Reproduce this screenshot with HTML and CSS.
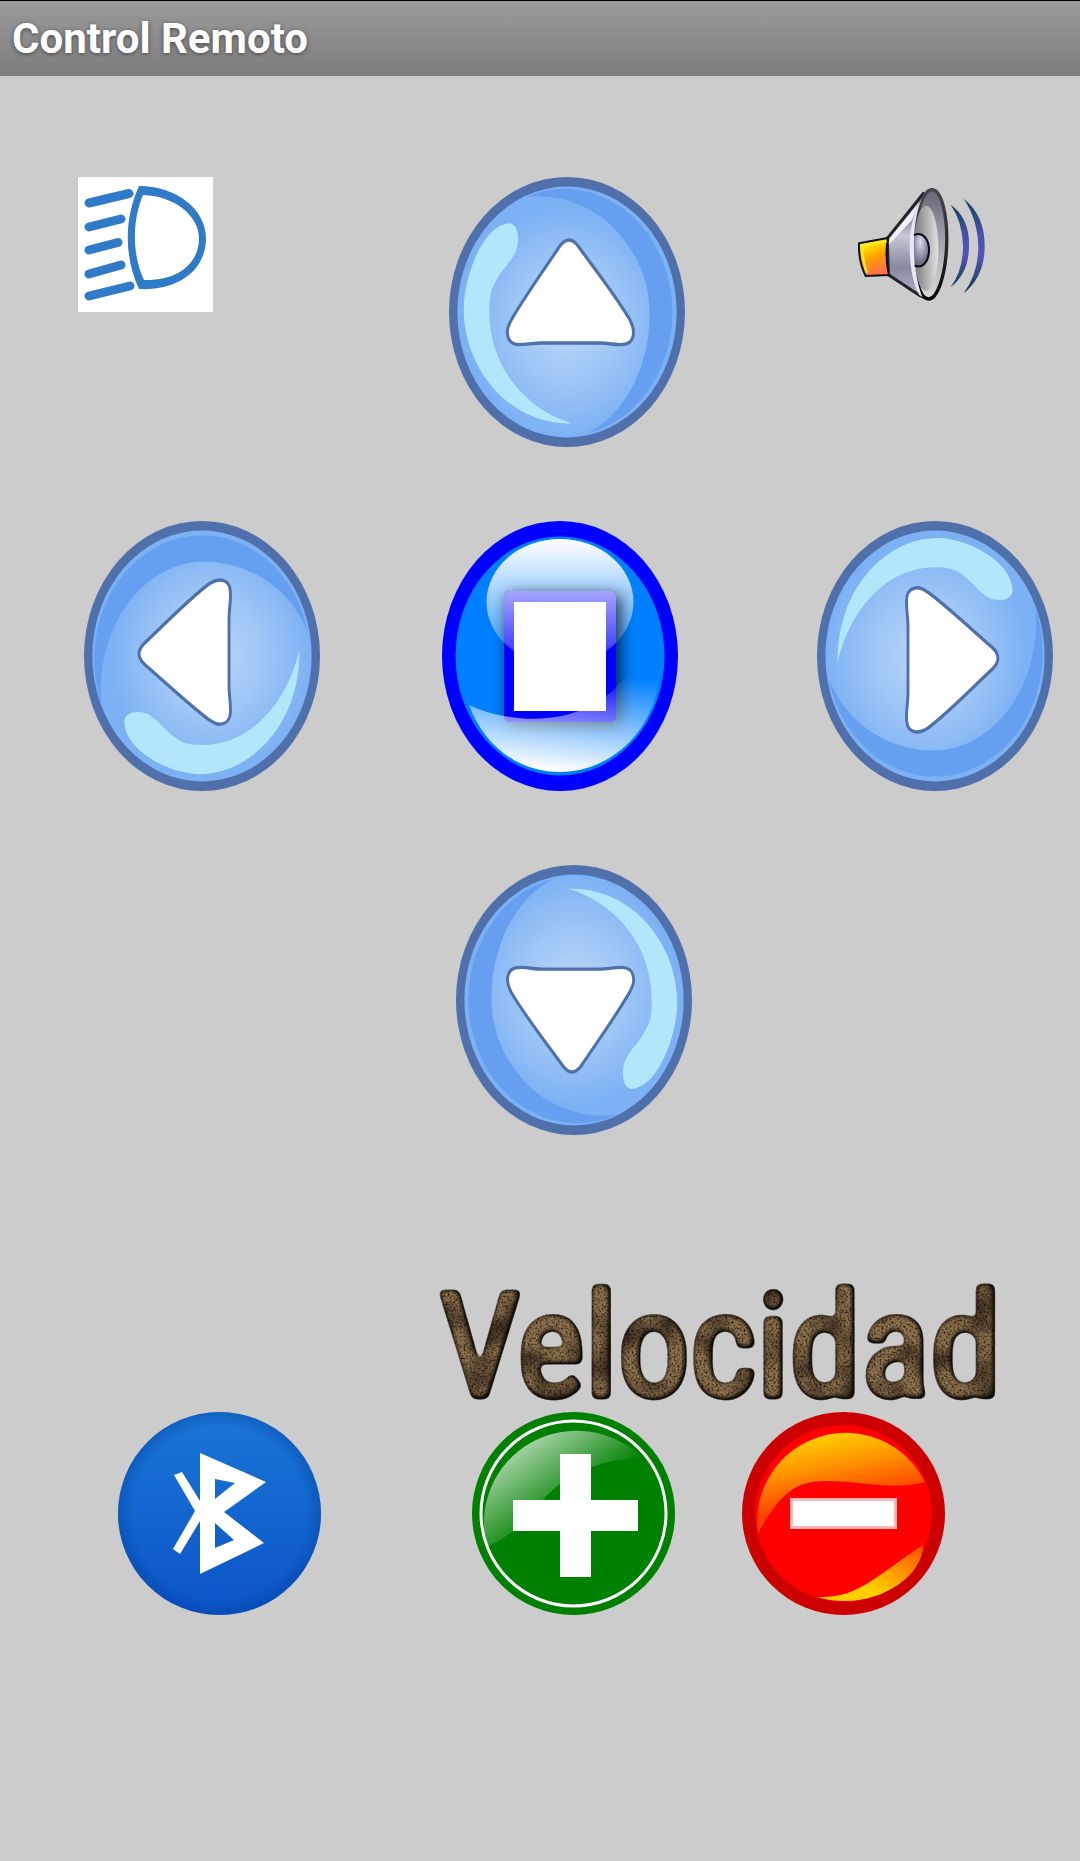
FILE: index.html
```html
<!DOCTYPE html>
<html lang="es">
<head>
<meta charset="utf-8">
<meta name="viewport" content="width=device-width, initial-scale=1">
<title>Control Remoto</title>
<link rel="stylesheet" href="styles.css">
</head>
<body>
<svg class="defs" aria-hidden="true">
  <defs>
    <radialGradient id="orb" cx="0.5" cy="0.54" r="0.46">
      <stop offset="0" stop-color="#bbd6f8"/>
      <stop offset="0.5" stop-color="#a0c7f6"/>
      <stop offset="1" stop-color="#7cb1f4"/>
    </radialGradient>
    <symbol id="arrow" viewBox="0 0 240 240" preserveAspectRatio="none" overflow="visible">
      <circle cx="120" cy="120" r="120" fill="#5070ab"/>
      <circle cx="120" cy="120" r="111.5" fill="url(#orb)"/>
      <path fill="#669ff0" d="M77 18C110 14 143 25 165 43C190 64 204 92 204 121C204 170 178 212 140 228A110 110 0 1 0 77 18Z"/>
      <path fill="#b1e6fb" d="M62 41C69 42 71 50 70 58C69 72 54 81 48 92C42 100 41 108 41 120C41 167 75 205 125 219C109 219 98 217 86 213C44 199 15 159 15 118C15 87 36 41 62 41Z"/>
      <path fill="#fff" stroke="#5070ab" stroke-width="3" d="M113 61Q122 51 131 61C150 84 170 106 184 127C188 134 188 139 187 142C185 149 178 149 173 149C166 149 161 147.500 154 147.500H93C86 147.500 81 149 71 149C65 149 61 146 60 142C58 136 61 131 64 126C78 105 97 82 113 61Z"/>
    </symbol>
    <filter id="stone" x="-5%" y="-5%" width="110%" height="110%" color-interpolation-filters="sRGB">
      <!-- Round the corners of the letters -->
      <feGaussianBlur in="SourceGraphic" stdDeviation="3" result="melt"/>
      <feColorMatrix in="melt" type="matrix" values="0 0 0 0 0.560  0 0 0 0 0.450  0 0 0 0 0.310  0 0 0 6 -2.300" result="body"/>
      <!-- Fine dark specks -->
      <feTurbulence type="fractalNoise" baseFrequency="0.500" numOctaves="3" seed="8" result="noise"/>
      <feColorMatrix in="noise" type="matrix" values="0 0 0 0 0.080  0 0 0 0 0.050  0 0 0 0 0.020  0 2.400 0 0 -1.050" result="specks"/>
      <!-- Broad light and dark patches -->
      <feTurbulence type="fractalNoise" baseFrequency="0.030" numOctaves="2" seed="3" result="cloud"/>
      <feColorMatrix in="cloud" type="matrix" values="0 0 0 0 0.150  0 0 0 0 0.110  0 0 0 0 0.080  0 2 0 0 -0.850" result="patches"/>
      <feMerge result="cover"><feMergeNode in="body"/><feMergeNode in="patches"/><feMergeNode in="specks"/></feMerge>
      <feComposite in="cover" in2="body" operator="in" result="textured"/>
      <!-- Dark bevel round the edge -->
      <feGaussianBlur in="body" stdDeviation="3" result="soft"/>
      <feOffset in="soft" dx="-1" dy="-1" result="softMoved"/>
      <feColorMatrix in="softMoved" type="matrix" values="0 0 0 0 0.050  0 0 0 0 0.040  0 0 0 0 0.030  0 0 0 -2.200 2.050" result="edge"/>
      <feComposite in="edge" in2="body" operator="in" result="rim"/>
      <feMerge><feMergeNode in="textured"/><feMergeNode in="rim"/></feMerge>
    </filter>
  </defs>
</svg>

<header class="titlebar"><h1>Control Remoto</h1></header>

<main class="remote">
  <div class="row row-top">
    <button class="key key-small" type="button" aria-label="Luces">
      <svg viewBox="0 0 135 135">
        <path fill="#fff" d="M0 0H135V135H0Z"/>
        <path fill="#2f7bc8" fill-rule="evenodd" d="M61 9C98 9 128 32 128 61C128 95 98 114 61 112C46 80 46 42 61 9ZM65 18C54 44 54 78 66 103C98 104 121 88 121 61C121 40 98 19 65 18Z"/>
        <path fill="none" stroke="#2f7bc8" stroke-width="9" stroke-linecap="round" d="M11 26L51 16.500M11 50L43 42M11 73L40 65.500M11 97L43 88M11 119L52 109"/>
      </svg>
    </button>
    <button class="key key-oval" type="button" aria-label="Adelante">
      <svg viewBox="0 0 240 240" preserveAspectRatio="none"><use href="#arrow" width="240" height="240"/></svg>
    </button>
    <button class="key key-small" type="button" aria-label="Bocina">
      <svg viewBox="39 21 405 405">
        <defs>
          <linearGradient id="cone" x1="0" y1="0" x2="0" y2="1"><stop offset="0.200" stop-color="#77778a"/><stop offset="0.400" stop-color="#c8c8d8"/><stop offset="0.700" stop-color="#8888a0"/><stop offset="1" stop-color="#b5b5cc"/></linearGradient>
          <linearGradient id="dish" x1="0" y1="0" x2="1" y2="0"><stop offset="0" stop-color="#777"/><stop offset="1" stop-color="#e2e2e2"/></linearGradient>
          <linearGradient id="rimfill" x1="0" y1="0" x2="0" y2="1"><stop offset="0" stop-color="#666674"/><stop offset="0.500" stop-color="#a8a8b0"/><stop offset="1" stop-color="#d8d8d8"/></linearGradient>
          <linearGradient id="rimline" x1="0" y1="0" x2="0" y2="1"><stop offset="0" stop-color="#484850"/><stop offset="1" stop-color="#080808"/></linearGradient>
          <linearGradient id="magnet" x1="0" y1="0" x2="0.300" y2="1"><stop offset="0.200" stop-color="#fff200"/><stop offset="0.600" stop-color="#ffa000"/><stop offset="1" stop-color="#ff7048"/></linearGradient>
          <linearGradient id="wave" x1="0" y1="0" x2="0" y2="1"><stop offset="0" stop-color="#154355"/><stop offset="0.350" stop-color="#4450a8"/><stop offset="0.600" stop-color="#5555bb"/><stop offset="1" stop-color="#103c48"/></linearGradient>
          <radialGradient id="cap" cx="0.400" cy="0.250" r="0.700"><stop offset="0" stop-color="#d8d8ee"/><stop offset="1" stop-color="#66667c"/></radialGradient>
        </defs>
        <path fill="url(#cone)" stroke="#222228" stroke-width="9" stroke-linejoin="round" d="M142 205L250 70L262 386L238 376L145 314Z"/>
        <ellipse cx="271" cy="223" rx="49" ry="164" fill="url(#rimfill)" stroke="url(#rimline)" stroke-width="10" transform="rotate(2 271 223)"/>
        <ellipse cx="258" cy="235" rx="37" ry="128" fill="url(#dish)"/>
        <path fill="#e8e8f4" d="M246 84C226 130 221 190 222 240C224 300 233 345 247 381L238 375C217 335 209 290 209 220C210 170 222 125 246 84Z"/>
        <path fill="#f0f0fa" d="M150 205L238 95L216 150L146 224Z"/>
        <path fill="url(#cap)" d="M224 195C248 185 267 208 267 240C267 277 245 297 224 287Z"/>
        <path fill="none" stroke="#0c0c14" stroke-width="6" d="M222 196C248 183 267 208 267 240C267 277 245 297 224 287"/>
        <path fill="url(#magnet)" stroke="#111" stroke-width="6" stroke-linejoin="round" d="M57 220L143 204C138 240 138 280 147 315L77 318C62 288 56 255 57 220Z"/>
        <path fill="none" stroke="#ffe92a" stroke-width="7" d="M140 214L68 226C66 255 71 282 81 309"/>
        <path fill="url(#wave)" d="M332 104Q390 145 387 230Q386 310 332 351Q370 300 369 226Q367 155 332 104Z"/>
        <path fill="url(#wave)" d="M371 86Q434 135 434 228Q434 320 371 370Q415 310 415 230Q413 148 371 86Z"/>
      </svg>
    </button>
  </div>

  <div class="row row-middle">
    <button class="key key-oval" type="button" aria-label="Izquierda">
      <svg viewBox="0 0 240 240" preserveAspectRatio="none"><g transform="rotate(-90 120 120)"><use href="#arrow" width="240" height="240"/></g></svg>
    </button>
    <button class="key key-oval" type="button" aria-label="Detener">
      <svg viewBox="0 0 236 270" preserveAspectRatio="none">
        <defs>
          <linearGradient id="glossTop" x1="0" y1="0" x2="0" y2="1"><stop offset="0" stop-color="#fff"/><stop offset="1" stop-color="#fff" stop-opacity="0.150"/></linearGradient>
          <linearGradient id="glossLow" gradientUnits="userSpaceOnUse" x1="124" y1="148" x2="112" y2="250"><stop offset="0" stop-color="#fff" stop-opacity="0"/><stop offset="1" stop-color="#fff"/></linearGradient>
          <filter id="shade" x="-30%" y="-30%" width="170%" height="170%"><feDropShadow dx="4" dy="4" stdDeviation="8" flood-color="#000" flood-opacity="0.750"/></filter>
        </defs>
        <ellipse cx="118" cy="135" rx="118" ry="135" fill="#00f"/>
        <ellipse cx="118" cy="135" rx="104.500" ry="119.500" fill="#0080ff"/>
        <ellipse cx="118" cy="81" rx="73.500" ry="63" fill="url(#glossTop)"/>
        <rect x="62" y="70" width="112" height="131" rx="5" fill="#00f" filter="url(#shade)"/>
        <clipPath id="frame"><rect x="62" y="70" width="112" height="131" rx="5"/></clipPath>
        <ellipse cx="118" cy="81" rx="73.500" ry="63" fill="url(#glossTop)" clip-path="url(#frame)"/>
        <path fill="url(#glossLow)" d="M27 184C72 205 150 208 188 149Q203 146 218 146C216 210 168 251 118 251C80 251 44 229 27 184Z"/>
        <rect x="72" y="81" width="92" height="109" fill="#fff"/>
      </svg>
    </button>
    <button class="key key-oval" type="button" aria-label="Derecha">
      <svg viewBox="0 0 240 240" preserveAspectRatio="none"><g transform="rotate(90 120 120)"><use href="#arrow" width="240" height="240"/></g></svg>
    </button>
  </div>

  <div class="row row-bottom">
    <button class="key key-oval" type="button" aria-label="Atrás">
      <svg viewBox="0 0 240 240" preserveAspectRatio="none"><g transform="rotate(180 120 120)"><use href="#arrow" width="240" height="240"/></g></svg>
    </button>
  </div>

  <section class="row row-speed">
    <h2 class="speed-title">Velocidad</h2>
    <button class="key key-round" type="button" aria-label="Bluetooth">
      <svg viewBox="0 0 203 203">
        <defs>
          <linearGradient id="btFill" x1="0" y1="0" x2="0" y2="1"><stop offset="0" stop-color="#1a76d5"/><stop offset="1" stop-color="#0b54c8"/></linearGradient>
          <radialGradient id="btEdge"><stop offset="0.850" stop-color="#003c96" stop-opacity="0"/><stop offset="1" stop-color="#003c96" stop-opacity="0.350"/></radialGradient>
        </defs>
        <circle cx="101.500" cy="101.500" r="101.500" fill="url(#btFill)"/>
        <circle cx="101.500" cy="101.500" r="101.500" fill="url(#btEdge)"/>
        <path fill="#fff" fill-rule="evenodd" d="M82 41L148 70L106 100L146 131L82 162V109L62 142L55 137L77 99L56 63L64 60L82 89ZM97 67V87L117 71ZM97 111V136L116 128Z"/>
      </svg>
    </button>
    <button class="key key-round" type="button" aria-label="Aumentar velocidad">
      <svg viewBox="0 0 203 203">
        <defs><linearGradient id="greenGloss" gradientUnits="userSpaceOnUse" x1="30" y1="25" x2="88" y2="106"><stop offset="0" stop-color="#fff" stop-opacity="0.800"/><stop offset="1" stop-color="#fff" stop-opacity="0"/></linearGradient></defs>
        <circle cx="101.500" cy="101.500" r="101.500" fill="#008000"/>
        <path fill="url(#greenGloss)" d="M15 135A92.500 92.500 0 0 1 170 46C125 47 90 65 71 88C55 108 42 122 15 135Z"/>
        <circle cx="101.500" cy="101.500" r="92.500" fill="none" stroke="#fff" stroke-width="3"/>
        <path fill="#fff" d="M88 42H119V88H166V119H119V165H88V119H41V88H88Z"/>
      </svg>
    </button>
    <button class="key key-round" type="button" aria-label="Reducir velocidad">
      <svg viewBox="0 0 203 203">
        <defs>
          <linearGradient id="amber" gradientUnits="userSpaceOnUse" x1="88" y1="13" x2="102" y2="90"><stop offset="0" stop-color="#fd0"/><stop offset="0.500" stop-color="#ff9500"/><stop offset="1" stop-color="#ff4000"/></linearGradient>
          <linearGradient id="amberLow" gradientUnits="userSpaceOnUse" x1="185" y1="133" x2="150" y2="190"><stop offset="0" stop-color="#ff4a00"/><stop offset="1" stop-color="#ffd000"/></linearGradient>
        </defs>
        <circle cx="101.500" cy="101.500" r="101.500" fill="#c00"/>
        <circle cx="101.500" cy="101.500" r="88.500" fill="red"/>
        <path fill="url(#amber)" d="M16 121A88.500 88.500 0 0 1 183 70C152 79 119 69 85 69C51 69 38 83 16 121Z"/>
        <path fill="url(#amberLow)" d="M76 185C115 187 134 164 181 133C181 164 140 190 102 189Q87 189 76 185Z"/>
        <rect x="49.500" y="87.500" width="104" height="28" fill="#fff" stroke="#ffb8b8" stroke-width="3"/>
      </svg>
    </button>
  </section>
</main>
</body>
</html>
```

FILE: styles.css
```css
* {
  box-sizing: border-box;
}

body {
  margin: 0;
  min-height: 100vh;
  background: #ccc;
  font-family: Roboto, "Liberation Sans", sans-serif;
}

.defs {
  position: absolute;
  width: 0;
  height: 0;
}

.titlebar {
  display: flex;
  align-items: center;
  height: 76px;
  padding: 0 12px;
  border-top: 1px solid #000;
  background: linear-gradient(#9b9b9b, #7c7c7c);
}

.titlebar h1 {
  margin: 0;
  color: #fff;
  font-size: 42px;
  font-weight: 700;
  line-height: 48px;
  text-shadow: 0 1px 4px #444;
}

.remote {
  display: flex;
  flex-direction: column;
  gap: 74px;
  padding: 101px 0 48px;
}

.row {
  display: grid;
}

/* Flexible tracks are the free space around the fixed-size keys. */
.row-top {
  grid-template-columns: 78fr 135px 236fr 236px 168fr 135px 92fr;
}

.row-middle {
  grid-template-columns: 84fr 236px 122fr 236px 139fr 236px 27fr;
}

.row-bottom {
  grid-template-columns: 456fr 236px 388fr;
}

.row-speed {
  grid-template-columns: 118fr 203px 151fr 203px 67fr 203px 135fr;
  padding-top: 73px;
}

.row .key:nth-of-type(1) {
  grid-column: 2;
}

.row .key:nth-of-type(2) {
  grid-column: 4;
}

.row .key:nth-of-type(3) {
  grid-column: 6;
}

.key {
  display: block;
  padding: 0;
  border: 0;
  background: none;
  cursor: pointer;
}

.key svg {
  display: block;
  width: 100%;
  height: 100%;
}

.key-small {
  width: 135px;
  height: 135px;
}

.key-oval {
  width: 236px;
  height: 270px;
}

.key-round {
  width: 203px;
  height: 203px;
}

.speed-title {
  grid-column: 3 / 8;
  justify-self: center;
  margin: 0;
  padding-left: 40px;
  color: #8a6f4d;
  font-family: "Roboto Condensed", "Liberation Sans Narrow", "Liberation Sans", sans-serif;
  font-size: 144px;
  font-weight: 400;
  line-height: 130px;
  -webkit-text-stroke: 6px #8a6f4d;
  filter: url(#stone);
}
```
